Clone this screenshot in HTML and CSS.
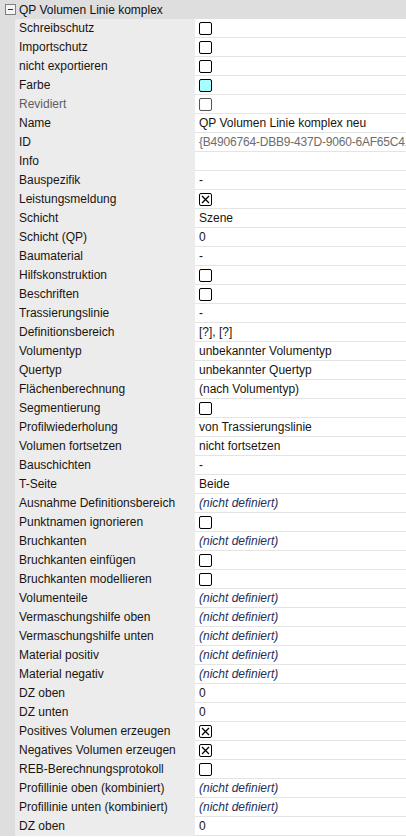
FILE: index.html
```html
<!DOCTYPE html>
<html>
<head>
<meta charset="utf-8">
<link rel="stylesheet" href="styles.css">
</head>
<body>
<div class="grid">
  <div class="header">
    <span class="toggle"><svg width="11" height="11" viewBox="0 0 11 11"><rect x="0.5" y="0.5" width="10" height="10" fill="#f4f4f4" stroke="#808080"/><rect x="3" y="5" width="5" height="1" fill="#303030"/></svg></span>
    <span class="htext">QP Volumen Linie komplex</span>
  </div>
  <div class="rows" id="rows"></div>
</div>
<script src="script.js"></script>
</body>
</html>
```
FILE: script.js
```js
var rows = [
  ["Schreibschutz","cb"],["Importschutz","cb"],["nicht exportieren","cb"],["Farbe","color"],["Revidiert","cbgray","gray"],
  ["Name","QP Volumen Linie komplex neu"],["ID","{B4906764-DBB9-437D-9060-6AF65C410E5A}","id"],["Info",""],["Bauspezifik","-"],
  ["Leistungsmeldung","cbx"],["Schicht","Szene"],["Schicht (QP)","0"],["Baumaterial","-"],["Hilfskonstruktion","cb"],
  ["Beschriften","cb"],["Trassierungslinie","-"],["Definitionsbereich","[?], [?]"],["Volumentyp","unbekannter Volumentyp"],
  ["Quertyp","unbekannter Quertyp"],["Flächenberechnung","(nach Volumentyp)"],["Segmentierung","cb"],
  ["Profilwiederholung","von Trassierungslinie"],["Volumen fortsetzen","nicht fortsetzen"],["Bauschichten","-"],["T-Seite","Beide"],
  ["Ausnahme Definitionsbereich","nd"],["Punktnamen ignorieren","cb"],["Bruchkanten","nd"],["Bruchkanten einfügen","cb"],
  ["Bruchkanten modellieren","cb"],["Volumenteile","nd"],["Vermaschungshilfe oben","nd"],["Vermaschungshilfe unten","nd"],
  ["Material positiv","nd"],["Material negativ","nd"],["DZ oben","0"],["DZ unten","0"],["Positives Volumen erzeugen","cbx"],
  ["Negatives Volumen erzeugen","cbx"],["REB-Berechnungsprotokoll","cb"],["Profillinie oben (kombiniert)","nd"],
  ["Profillinie unten (kombiniert)","nd"],["DZ oben","0"]
];
var box = '<svg class="cb" width="13" height="13" viewBox="0 0 13 13"><rect x="0.5" y="0.5" width="12" height="12" rx="1.5" fill="#fff" stroke="COL"/>X</svg>';
function cb(col, x, fill){
  var s = box.replace("COL", col);
  if (fill) s = s.replace('fill="#fff"', 'fill="' + fill + '"');
  return s.replace("X", x ? '<path d="M3 3L10 10M10 3L3 10" stroke="#000" stroke-width="1.3"/>' : '');
}
var html = "";
rows.forEach(function(r){
  var v = r[1], cls = "val", inner;
  if (v === "cb") inner = cb("#000");
  else if (v === "cbx") inner = cb("#000", true);
  else if (v === "cbgray") inner = cb("#555");
  else if (v === "color") inner = cb("#000", false, "#a6ffff");
  else if (v === "nd") { inner = "(nicht definiert)"; cls += " nd"; }
  else inner = v;
  if (r[2] === "id") cls += " grayval";
  html += '<div class="row"><div class="gut"></div><div class="name' + (r[2] === "gray" ? " grayname" : "") + '">' + r[0] + '</div><div class="' + cls + '">' + inner + '</div></div>';
});
document.getElementById("rows").innerHTML = html;
```
FILE: styles.css
```css
html, body { margin: 0; padding: 0; background: #fff; }
.grid { width: 406px; font-family: "Liberation Sans", Arial, sans-serif; font-size: 12px; color: #1a1410; }
.header { height: 19px; background: #dedede; display: flex; align-items: center; }
.toggle { width: 19px; display: flex; justify-content: center; padding-left: 1px; box-sizing: border-box; }
.toggle svg { display: block; }
.htext { color: #111; }
.row { display: grid; grid-template-columns: 15px 180px 1fr; height: 19px; }
.gut { background: #dedede; }
.name { background: #ececec; padding-left: 4px; line-height: 19px; white-space: nowrap; overflow: hidden; }
.grayname { color: #5e5e5e; }
.val { background: #fff; border-bottom: 1px solid #e4e4e4; padding-left: 4px; line-height: 18px; white-space: nowrap; overflow: hidden; display: flex; align-items: center; }
.val .cb { display: block; }
.nd { font-style: italic; color: #22305e; }
.grayval { color: #6d6d6d; letter-spacing: -0.2px; }
```
